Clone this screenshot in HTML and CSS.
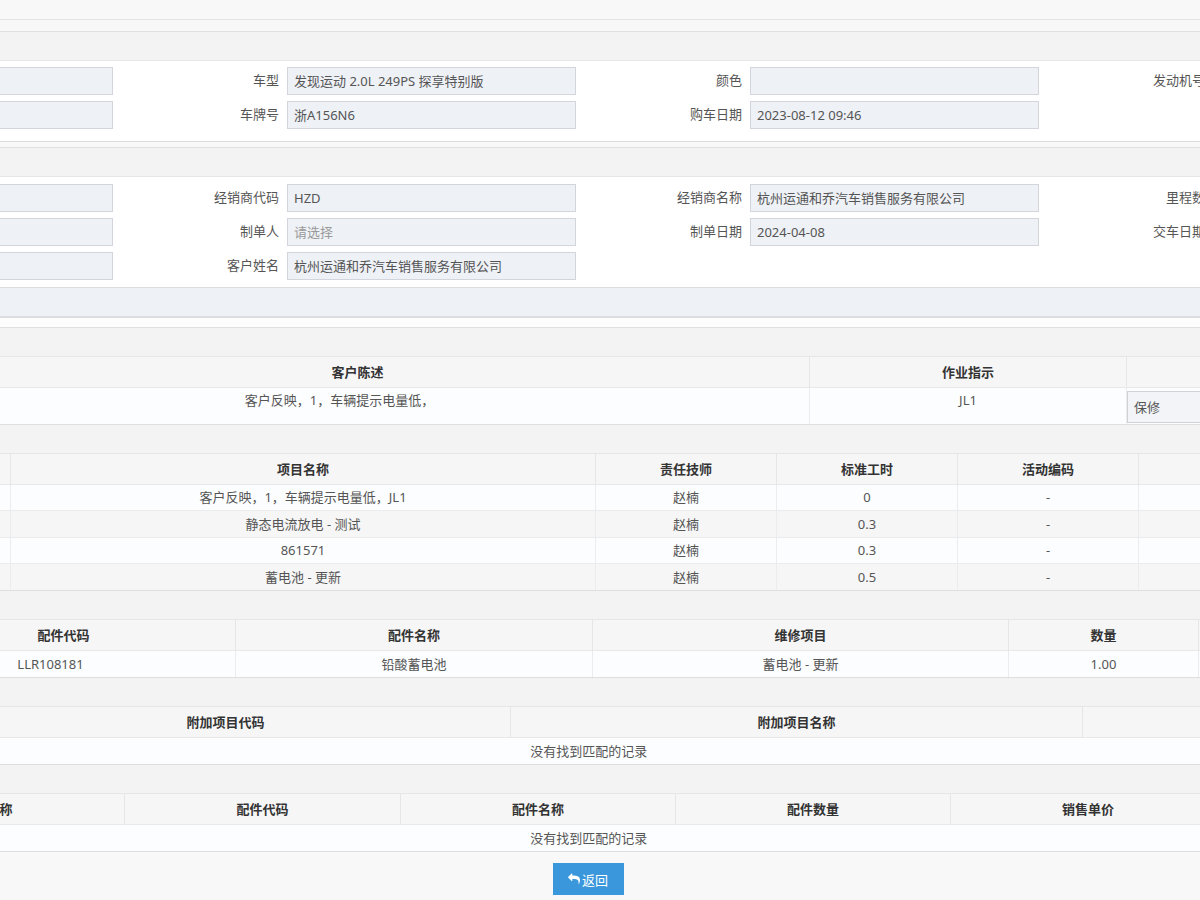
FILE: index.html
```html
<!DOCTYPE html>
<html lang="zh-CN">
<head>
<meta charset="utf-8">
<title>维修工单详情</title>
<link rel="stylesheet" href="styles.css">
</head>
<body>
<div class="topbar"></div>
<div class="gap-top"></div>

<section class="panel">
  <div class="panel-head"></div>
  <div class="panel-body">
    <div class="frow">
      <div class="fcell"><label class="flabel"></label><div class="finput"></div></div>
      <div class="fcell"><label class="flabel">车型</label><div class="finput">发现运动 2.0L 249PS 探享特别版</div></div>
      <div class="fcell"><label class="flabel">颜色</label><div class="finput"></div></div>
      <div class="fcell"><label class="flabel">发动机号</label><div class="finput"></div></div>
    </div>
    <div class="frow">
      <div class="fcell"><label class="flabel"></label><div class="finput"></div></div>
      <div class="fcell"><label class="flabel">车牌号</label><div class="finput">浙A156N6</div></div>
      <div class="fcell"><label class="flabel">购车日期</label><div class="finput">2023-08-12 09:46</div></div>
      <div class="fcell"></div>
    </div>
  </div>
</section>

<section class="panel panel-second">
  <div class="panel-head"></div>
  <div class="panel-body body-second">
    <div class="frow">
      <div class="fcell"><label class="flabel"></label><div class="finput"></div></div>
      <div class="fcell"><label class="flabel">经销商代码</label><div class="finput">HZD</div></div>
      <div class="fcell"><label class="flabel">经销商名称</label><div class="finput">杭州运通和乔汽车销售服务有限公司</div></div>
      <div class="fcell"><label class="flabel">里程数</label><div class="finput"></div></div>
    </div>
    <div class="frow">
      <div class="fcell"><label class="flabel"></label><div class="finput"></div></div>
      <div class="fcell"><label class="flabel">制单人</label><div class="finput placeholder">请选择</div></div>
      <div class="fcell"><label class="flabel">制单日期</label><div class="finput">2024-04-08</div></div>
      <div class="fcell"><label class="flabel">交车日期</label><div class="finput"></div></div>
    </div>
    <div class="frow">
      <div class="fcell"><label class="flabel"></label><div class="finput"></div></div>
      <div class="fcell"><label class="flabel">客户姓名</label><div class="finput">杭州运通和乔汽车销售服务有限公司</div></div>
      <div class="fcell"></div>
      <div class="fcell"></div>
    </div>
  </div>
  <div class="bluebar"></div>
</section>

<div class="gap-mid"></div>

<section class="tsec first">
  <div class="panel-head"></div>
  <table class="tbl">
    <colgroup><col style="width:57px"><col style="width:904px"><col style="width:317px"><col style="width:202px"></colgroup>
    <thead><tr><th></th><th>客户陈述</th><th>作业指示</th><th></th></tr></thead>
    <tbody>
      <tr class="tall"><td></td><td class="desc">客户反映，1，车辆提示电量低，</td><td>JL1</td><td class="selcell"><div class="select">保修</div></td></tr>
    </tbody>
  </table>
</section>

<section class="tsec">
  <div class="panel-head"></div>
  <table class="tbl striped">
    <colgroup><col style="width:162px"><col style="width:585px"><col style="width:181px"><col style="width:181px"><col style="width:181px"><col style="width:190px"></colgroup>
    <thead><tr><th></th><th>项目名称</th><th>责任技师</th><th>标准工时</th><th>活动编码</th><th></th></tr></thead>
    <tbody>
      <tr><td></td><td>客户反映，1，车辆提示电量低，JL1</td><td>赵楠</td><td>0</td><td>-</td><td></td></tr>
      <tr><td></td><td>静态电流放电 - 测试</td><td>赵楠</td><td>0.3</td><td>-</td><td></td></tr>
      <tr><td></td><td>861571</td><td>赵楠</td><td>0.3</td><td>-</td><td></td></tr>
      <tr><td></td><td>蓄电池 - 更新</td><td>赵楠</td><td>0.5</td><td>-</td><td></td></tr>
    </tbody>
  </table>
</section>

<section class="tsec">
  <div class="panel-head"></div>
  <table class="tbl">
    <colgroup><col style="width:43px"><col style="width:344px"><col style="width:357px"><col style="width:416px"><col style="width:190px"><col style="width:130px"></colgroup>
    <thead><tr><th></th><th>配件代码</th><th>配件名称</th><th>维修项目</th><th>数量</th><th></th></tr></thead>
    <tbody>
      <tr><td></td><td class="code">LLR108181</td><td>铅酸蓄电池</td><td>蓄电池 - 更新</td><td>1.00</td><td></td></tr>
    </tbody>
  </table>
</section>

<section class="tsec">
  <div class="panel-head"></div>
  <table class="tbl">
    <colgroup><col style="width:92px"><col style="width:570px"><col style="width:572px"><col style="width:246px"></colgroup>
    <thead><tr><th></th><th>附加项目代码</th><th>附加项目名称</th><th></th></tr></thead>
    <tbody>
      <tr><td colspan="4" class="empty">没有找到匹配的记录</td></tr>
    </tbody>
  </table>
</section>

<section class="tsec">
  <div class="panel-head"></div>
  <table class="tbl">
    <colgroup><col style="width:276px"><col style="width:276px"><col style="width:275px"><col style="width:275px"><col style="width:275px"><col style="width:103px"></colgroup>
    <thead><tr><th>配件名称</th><th>配件代码</th><th>配件名称</th><th>配件数量</th><th>销售单价</th><th></th></tr></thead>
    <tbody>
      <tr><td colspan="6" class="empty">没有找到匹配的记录</td></tr>
    </tbody>
  </table>
</section>

<div class="footer">
  <button class="btn" type="button"><svg class="ico" viewBox="0 0 1792 1792" aria-hidden="true"><path d="M1792 1120q0 166-127 451-3 7-10.5 24t-13.5 30-13 22q-12 17-28 17-15 0-23.5-10t-8.5-25q0-9 2.5-26.5t2.5-23.5q5-68 5-123 0-101-17.5-181t-48.5-138.5-80-101-105.5-69.5-133-42.5-154-21.5-175.5-6h-224v256q0 26-19 45t-45 19-45-19l-512-512q-19-19-19-45t19-45l512-512q19-19 45-19t45 19 19 45v256h224q713 0 875 403 53 134 53 333z"/></svg>返回</button>
</div>
</body>
</html>
```

FILE: styles.css
```css
* { box-sizing: border-box; }
html, body { margin: 0; padding: 0; overflow: hidden; }
body {
  width: 1200px;
  height: 900px;
  background: #f8f8f8;
  color: #555;
  font-family: "Noto Sans", "Noto Sans CJK SC", sans-serif;
  font-size: 13px;
  line-height: 18px;
}

.topbar { height: 20px; background: #f8f8f8; border-bottom: 1px solid #e3e3e3; }
.gap-top { height: 11px; }
.gap-mid { height: 9px; background: #fdfdfd; }

.panel { background: #fff; border-top: 1px solid #e0e0e0; border-bottom: 1px solid #dcdcdc; }
.panel-second { margin-top: 5px; }
.panel-head { height: 29px; background: #f3f3f3; border-bottom: 1px solid #e6e6e6; }
.panel-body { padding: 6px 0 12px; overflow: hidden; }
.body-second { padding: 7px 0 7px; border-bottom: 1px solid #dcdcdc; }
.bluebar { height: 29px; background: #eef1f6; border-bottom: 1px solid #dadde2; }

.frow { display: flex; width: 1852px; margin-left: -346px; }
.frow + .frow { margin-top: 6px; }
.fcell { display: flex; width: 463px; height: 28px; }
.flabel {
  width: 170px;
  padding-right: 8px;
  text-align: right;
  line-height: 26px;
  color: #555;
  white-space: nowrap;
}
.finput {
  width: 289px;
  height: 28px;
  padding: 0 6px;
  line-height: 26px;
  background: #eef1f6;
  border: 1px solid #d2d6dc;
  color: #555;
  white-space: nowrap;
  overflow: hidden;
}
.finput.placeholder { color: #9a9a9a; }

.tsec { background: #fff; border-bottom: 1px solid #dedede; overflow: hidden; }
.tsec.first { border-top: 1px solid #e0e0e0; }

.tbl {
  width: 1480px;
  margin-left: -152px;
  border-collapse: collapse;
  table-layout: fixed;
}
.tbl th {
  height: 30px;
  padding: 0;
  background: #f6f6f6;
  color: #333;
  font-weight: bold;
  text-align: center;
  border-left: 1px solid #e6e6e6;
}
.tbl td {
  height: 27px;
  padding: 0;
  text-align: center;
  color: #555;
  background: #fcfdfe;
  border-left: 1px solid #ececec;
  border-top: 1px solid #ececec;
  white-space: nowrap;
}
.tbl tbody tr:first-child td { border-top: 1px solid #e8e8e8; }
.tbl.striped td { height: 26.5px; }
.tbl.striped tbody tr:nth-child(even) td { background: #f6f6f6; }
.tbl td.code { padding-right: 26px; }
.tbl td.empty { background: #fcfdfe; }

.tall td { height: 37px; vertical-align: top; padding-top: 3px; }
.tall td.desc { padding-right: 36px; }
.tall td.selcell { padding: 3px 0 0 0; text-align: left; }
.select {
  width: 190px;
  height: 32px;
  padding: 0 6px;
  line-height: 30px;
  background: #f2f4f7;
  border: 1px solid #cfd3d8;
  color: #555;
}

.footer { width: 1480px; margin-left: -152px; padding-top: 11px; text-align: center; }
.btn {
  display: inline-flex;
  align-items: center;
  justify-content: center;
  gap: 2px;
  width: 71px;
  height: 32px;
  padding: 0;
  border: 0;
  background: #3a97dc;
  color: #fff;
  font-family: "Noto Sans", "Noto Sans CJK SC", sans-serif;
  font-size: 13px;
}
.ico { width: 12px; height: 12px; fill: #fff; }
```
